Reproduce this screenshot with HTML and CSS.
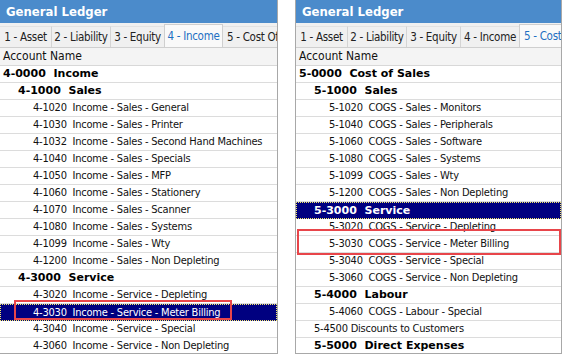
FILE: index.html
```html
<!DOCTYPE html>
<html lang="en">
<head>
  <meta charset="UTF-8">
  <title>General Ledger</title>
  <link rel="stylesheet" href="styles.css">
</head>
<body>
  <div class="screen">
    <section class="ledger ledger-left">
      <div class="title">General Ledger</div>
      <div class="tabs">
        <span class="tab tab-asset">1 - Asset</span>
        <span class="tab tab-liability">2 - Liability</span>
        <span class="tab tab-equity">3 - Equity</span>
        <span class="tab tab-income active">4 - Income</span>
        <span class="tab tab-cost">5 - Cost Of Sales</span>
      </div>
      <div class="colhead">Account Name</div>
      <ul class="rows">
        <li class="row lvl0 group">4-0000  Income</li>
        <li class="row lvl1 group">4-1000  Sales</li>
        <li class="row lvl2">4-1020  Income - Sales - General</li>
        <li class="row lvl2">4-1030  Income - Sales - Printer</li>
        <li class="row lvl2">4-1032  Income - Sales - Second Hand Machines</li>
        <li class="row lvl2">4-1040  Income - Sales - Specials</li>
        <li class="row lvl2">4-1050  Income - Sales - MFP</li>
        <li class="row lvl2">4-1060  Income - Sales - Stationery</li>
        <li class="row lvl2">4-1070  Income - Sales - Scanner</li>
        <li class="row lvl2">4-1080  Income - Sales - Systems</li>
        <li class="row lvl2">4-1099  Income - Sales - Wty</li>
        <li class="row lvl2">4-1200  Income - Sales - Non Depleting</li>
        <li class="row lvl1 group">4-3000  Service</li>
        <li class="row lvl2">4-3020  Income - Service - Depleting</li>
        <li class="row lvl2 selected">4-3030  Income - Service - Meter Billing</li>
        <li class="row lvl2">4-3040  Income - Service - Special</li>
        <li class="row lvl2">4-3060  Income - Service - Non Depleting</li>
      </ul>
      <div class="mark mark-left"></div>
    </section>

    <section class="ledger ledger-right">
      <div class="title">General Ledger</div>
      <div class="tabs">
        <span class="tab tab-asset">1 - Asset</span>
        <span class="tab tab-liability">2 - Liability</span>
        <span class="tab tab-equity">3 - Equity</span>
        <span class="tab tab-income">4 - Income</span>
        <span class="tab tab-cost active">5 - Cost Of Sales</span>
      </div>
      <div class="colhead">Account Name</div>
      <ul class="rows">
        <li class="row lvl0 group">5-0000  Cost of Sales</li>
        <li class="row lvl1 group">5-1000  Sales</li>
        <li class="row lvl2">5-1020  COGS - Sales - Monitors</li>
        <li class="row lvl2">5-1040  COGS - Sales - Peripherals</li>
        <li class="row lvl2">5-1060  COGS - Sales - Software</li>
        <li class="row lvl2">5-1080  COGS - Sales - Systems</li>
        <li class="row lvl2">5-1099  COGS - Sales - Wty</li>
        <li class="row lvl2">5-1200  COGS - Sales - Non Depleting</li>
        <li class="row lvl1 group selected">5-3000  Service</li>
        <li class="row lvl2">5-3020  COGS - Service - Depleting</li>
        <li class="row lvl2">5-3030  COGS - Service - Meter Billing</li>
        <li class="row lvl2">5-3040  COGS - Service - Special</li>
        <li class="row lvl2">5-3060  COGS - Service - Non Depleting</li>
        <li class="row lvl1 group">5-4000  Labour</li>
        <li class="row lvl2">5-4060  COGS - Labour - Special</li>
        <li class="row lvl1">5-4500 Discounts to Customers</li>
        <li class="row lvl1 group">5-5000  Direct Expenses</li>
      </ul>
      <div class="mark mark-right"></div>
    </section>
  </div>
</body>
</html>
```

FILE: styles.css
```css
body {
  margin: 0;
  background: #fff;
  font-family: "DejaVu Sans Condensed", "DejaVu Sans", sans-serif;
  font-stretch: condensed;
  font-size: 11px;
  color: #111;
}

.screen {
  display: flex;
  gap: 17px;
}

.ledger {
  position: relative;
  height: 354px;
  overflow: hidden;
  border-right: 1px solid #a8a8a8;
  border-bottom: 1px solid #a8a8a8;
  box-sizing: border-box;
}

.ledger-left {
  width: 278px;
}

.ledger-right {
  width: 267px;
  border-left: 1px solid #a8a8a8;
}

.title {
  height: 23px;
  line-height: 23px;
  padding-left: 6px;
  background-color: #4b8bcb;
  color: #fff;
  font-size: 13px;
  font-weight: bold;
}

.tabs {
  height: 24px;
  display: flex;
  align-items: flex-end;
  background-color: #f0f0f0;
  border-bottom: 1px solid #cfcfcf;
  white-space: nowrap;
  overflow: hidden;
}

.tab {
  flex: none;
  box-sizing: border-box;
  height: 21px;
  line-height: 20px;
  text-align: center;
  font-size: 11.5px;
  letter-spacing: -0.3px;
  color: #222;
  border-right: 1px solid #d4d4d4;
  border-top: 1px solid #e2e2e2;
}

.tab-asset {
  width: 52px;
}

.tab-liability {
  width: 59px;
}

.tab-equity {
  width: 54px;
}

.tab-income {
  width: 59px;
}

.tab-cost {
  padding-left: 4px;
  text-align: left;
}

.tab.active {
  height: 24px;
  line-height: 22px;
  margin-bottom: -1px;
  background-color: #f9f9f9;
  color: #1d6fc2;
  border: 1px solid #cfcfcf;
  border-bottom: none;
  margin-left: -1px;
}

.colhead {
  height: 17px;
  line-height: 17px;
  padding-left: 3px;
  font-size: 12px;
  background-color: #f4f4f4;
  border-bottom: 1px solid #d8d8d8;
}

.rows {
  list-style: none;
  margin: 0;
  padding: 0;
}

.row {
  height: 16px;
  line-height: 16px;
  border-bottom: 1px solid #dcdcdc;
  white-space: pre;
  letter-spacing: -0.22px;
}

.lvl0 {
  padding-left: 3px;
}

.lvl1 {
  padding-left: 18px;
}

.lvl2 {
  padding-left: 33px;
}

.group {
  font-family: "DejaVu Sans", sans-serif;
  font-stretch: normal;
  font-weight: bold;
  letter-spacing: 0;
  color: #000;
}

.selected {
  background-color: #000080;
  color: #fff;
  border: 1px dotted #f5e96a;
  height: 15px;
  line-height: 15px;
  padding-left: 32px;
}

.selected.lvl1 {
  padding-left: 17px;
}

.mark {
  position: absolute;
  border: 2px solid #e8454a;
  box-sizing: border-box;
}

.mark-left {
  left: 14px;
  top: 300px;
  width: 218px;
  height: 20px;
}

.mark-right {
  left: 1px;
  top: 229px;
  width: 264px;
  height: 26px;
}
```
